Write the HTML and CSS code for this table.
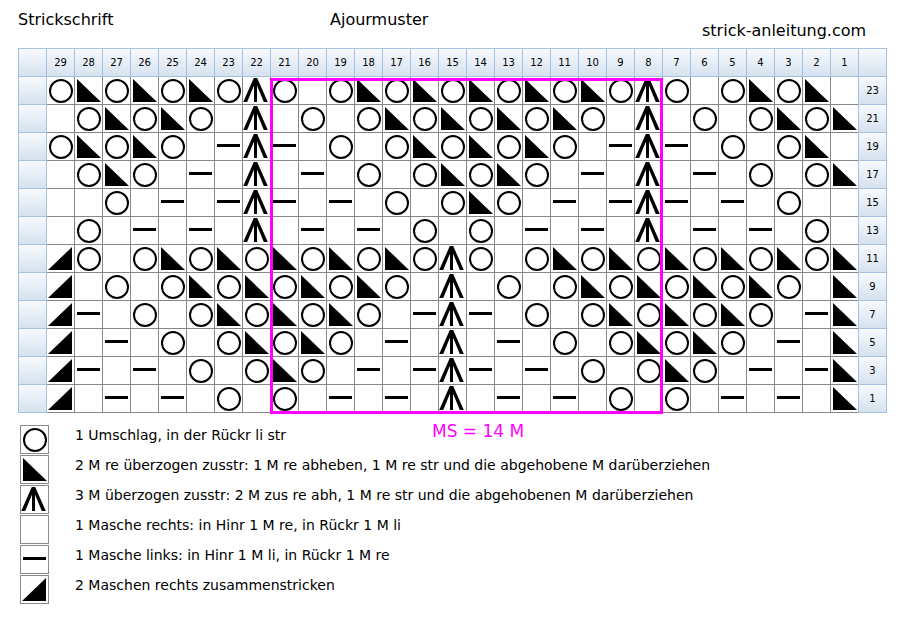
FILE: index.html
```html
<!DOCTYPE html>
<html lang="de">
<head>
<meta charset="utf-8">
<title>Strickschrift – Ajourmuster</title>
<link rel="stylesheet" href="styles.css">
</head>
<body>
<div class="page">
  <header class="titles">
    <span class="title">Strickschrift</span>
    <span class="title">Ajourmuster</span>
    <span class="title site">strick-anleitung.com</span>
  </header>

  <div class="chart-wrap">
    <div class="chart">
      <i class="h"></i><i class="h">29</i><i class="h">28</i><i class="h">27</i><i class="h">26</i><i class="h">25</i><i class="h">24</i><i class="h">23</i><i class="h">22</i><i class="h">21</i><i class="h">20</i><i class="h">19</i><i class="h">18</i><i class="h">17</i><i class="h">16</i><i class="h">15</i><i class="h">14</i><i class="h">13</i><i class="h">12</i><i class="h">11</i><i class="h">10</i><i class="h">9</i><i class="h">8</i><i class="h">7</i><i class="h">6</i><i class="h">5</i><i class="h">4</i><i class="h">3</i><i class="h">2</i><i class="h">1</i><i class="h n"></i>

      <i class="h"></i><i class="o"></i><i class="r"></i><i class="o"></i><i class="r"></i><i class="o"></i><i class="r"></i><i class="o"></i><i class="a"></i><i class="o"></i><i></i><i class="o"></i><i class="r"></i><i class="o"></i><i class="r"></i><i class="o"></i><i class="r"></i><i class="o"></i><i class="r"></i><i class="o"></i><i class="r"></i><i class="o"></i><i class="a"></i><i class="o"></i><i></i><i class="o"></i><i class="r"></i><i class="o"></i><i class="r"></i><i></i><i class="h n">23</i>

      <i class="h"></i><i></i><i class="o"></i><i class="r"></i><i class="o"></i><i class="r"></i><i class="o"></i><i></i><i class="a"></i><i></i><i class="o"></i><i></i><i class="o"></i><i class="r"></i><i class="o"></i><i class="r"></i><i class="o"></i><i class="r"></i><i class="o"></i><i class="r"></i><i class="o"></i><i></i><i class="a"></i><i></i><i class="o"></i><i></i><i class="o"></i><i class="r"></i><i class="o"></i><i class="r"></i><i class="h n">21</i>

      <i class="h"></i><i class="o"></i><i class="r"></i><i class="o"></i><i class="r"></i><i class="o"></i><i></i><i class="d"></i><i class="a"></i><i class="d"></i><i></i><i class="o"></i><i></i><i class="o"></i><i class="r"></i><i class="o"></i><i class="r"></i><i class="o"></i><i class="r"></i><i class="o"></i><i></i><i class="d"></i><i class="a"></i><i class="d"></i><i></i><i class="o"></i><i></i><i class="o"></i><i class="r"></i><i></i><i class="h n">19</i>

      <i class="h"></i><i></i><i class="o"></i><i class="r"></i><i class="o"></i><i></i><i class="d"></i><i></i><i class="a"></i><i></i><i class="d"></i><i></i><i class="o"></i><i></i><i class="o"></i><i class="r"></i><i class="o"></i><i class="r"></i><i class="o"></i><i></i><i class="d"></i><i></i><i class="a"></i><i></i><i class="d"></i><i></i><i class="o"></i><i></i><i class="o"></i><i class="r"></i><i class="h n">17</i>

      <i class="h"></i><i></i><i></i><i class="o"></i><i></i><i class="d"></i><i></i><i class="d"></i><i class="a"></i><i class="d"></i><i></i><i class="d"></i><i></i><i class="o"></i><i></i><i class="o"></i><i class="r"></i><i class="o"></i><i></i><i class="d"></i><i></i><i class="d"></i><i class="a"></i><i class="d"></i><i></i><i class="d"></i><i></i><i class="o"></i><i></i><i></i><i class="h n">15</i>

      <i class="h"></i><i></i><i class="o"></i><i></i><i class="d"></i><i></i><i class="d"></i><i></i><i class="a"></i><i></i><i class="d"></i><i></i><i class="d"></i><i></i><i class="o"></i><i></i><i class="o"></i><i></i><i class="d"></i><i></i><i class="d"></i><i></i><i class="a"></i><i></i><i class="d"></i><i></i><i class="d"></i><i></i><i class="o"></i><i></i><i class="h n">13</i>

      <i class="h"></i><i class="l"></i><i class="o"></i><i></i><i class="o"></i><i class="r"></i><i class="o"></i><i class="r"></i><i class="o"></i><i class="r"></i><i class="o"></i><i class="r"></i><i class="o"></i><i class="r"></i><i class="o"></i><i class="a"></i><i class="o"></i><i></i><i class="o"></i><i class="r"></i><i class="o"></i><i class="r"></i><i class="o"></i><i class="r"></i><i class="o"></i><i class="r"></i><i class="o"></i><i class="r"></i><i class="o"></i><i class="r"></i><i class="h n">11</i>

      <i class="h"></i><i class="l"></i><i></i><i class="o"></i><i></i><i class="o"></i><i class="r"></i><i class="o"></i><i class="r"></i><i class="o"></i><i class="r"></i><i class="o"></i><i class="r"></i><i class="o"></i><i></i><i class="a"></i><i></i><i class="o"></i><i></i><i class="o"></i><i class="r"></i><i class="o"></i><i class="r"></i><i class="o"></i><i class="r"></i><i class="o"></i><i class="r"></i><i class="o"></i><i></i><i class="r"></i><i class="h n">9</i>

      <i class="h"></i><i class="l"></i><i class="d"></i><i></i><i class="o"></i><i></i><i class="o"></i><i class="r"></i><i class="o"></i><i class="r"></i><i class="o"></i><i class="r"></i><i class="o"></i><i></i><i class="d"></i><i class="a"></i><i class="d"></i><i></i><i class="o"></i><i></i><i class="o"></i><i class="r"></i><i class="o"></i><i class="r"></i><i class="o"></i><i class="r"></i><i class="o"></i><i></i><i class="d"></i><i class="r"></i><i class="h n">7</i>

      <i class="h"></i><i class="l"></i><i></i><i class="d"></i><i></i><i class="o"></i><i></i><i class="o"></i><i class="r"></i><i class="o"></i><i class="r"></i><i class="o"></i><i></i><i class="d"></i><i></i><i class="a"></i><i></i><i class="d"></i><i></i><i class="o"></i><i></i><i class="o"></i><i class="r"></i><i class="o"></i><i class="r"></i><i class="o"></i><i></i><i class="d"></i><i></i><i class="r"></i><i class="h n">5</i>

      <i class="h"></i><i class="l"></i><i class="d"></i><i></i><i class="d"></i><i></i><i class="o"></i><i></i><i class="o"></i><i class="r"></i><i class="o"></i><i></i><i class="d"></i><i></i><i class="d"></i><i class="a"></i><i class="d"></i><i></i><i class="d"></i><i></i><i class="o"></i><i></i><i class="o"></i><i class="r"></i><i class="o"></i><i></i><i class="d"></i><i></i><i class="d"></i><i class="r"></i><i class="h n">3</i>

      <i class="h"></i><i class="l"></i><i></i><i class="d"></i><i></i><i class="d"></i><i></i><i class="o"></i><i></i><i class="o"></i><i></i><i class="d"></i><i></i><i class="d"></i><i></i><i class="a"></i><i></i><i class="d"></i><i></i><i class="d"></i><i></i><i class="o"></i><i></i><i class="o"></i><i></i><i class="d"></i><i></i><i class="d"></i><i></i><i class="r"></i><i class="h n">1</i>
    </div>
    <div class="repeat"><span class="repeat-label">MS = 14 M</span></div>
  </div>

  <ul class="legend">
    <li class="key"><span class="sym o"></span><span class="key-text">1 Umschlag, in der Rückr li str</span></li>
    <li class="key"><span class="sym r"></span><span class="key-text">2 M re überzogen zusstr: 1 M re abheben, 1 M re str und die abgehobene M darüberziehen</span></li>
    <li class="key"><span class="sym a"></span><span class="key-text">3 M überzogen zusstr: 2 M zus re abh, 1 M re str und die abgehobenen M darüberziehen</span></li>
    <li class="key"><span class="sym"></span><span class="key-text">1 Masche rechts: in Hinr 1 M re, in Rückr 1 M li</span></li>
    <li class="key"><span class="sym d"></span><span class="key-text">1 Masche links: in Hinr 1 M li, in Rückr 1 M re</span></li>
    <li class="key"><span class="sym l"></span><span class="key-text">2 Maschen rechts zusammenstricken</span></li>
  </ul>
</div>
</body>
</html>
```

FILE: styles.css
```css
html, body {
  margin: 0;
  padding: 0;
  background: #fff;
}

.page {
  padding: 11px 0 0 18px;
  font-family: "DejaVu Sans", Verdana, sans-serif;
  color: #000;
}

/* ---------- titles ---------- */
.titles {
  display: grid;
  grid-template-columns: 312px 372px auto;
  height: 37px;
  align-items: start;
}

.title {
  font-size: 16px;
  line-height: 18px;
  white-space: nowrap;
}

.site {
  padding-top: 11px;
}

/* ---------- chart ---------- */
.chart-wrap {
  position: relative;
  width: max-content;
}

.chart {
  display: grid;
  grid-template-columns: repeat(31, 28px);
  grid-auto-rows: 28px;
  border-top: 1px solid #a3c2e2;
  border-left: 1px solid #a3c2e2;
  width: max-content;
}

.chart > i {
  display: block;
  position: relative;
  box-sizing: border-box;
  border-right: 1px solid #868686;
  border-bottom: 1px solid #868686;
  background: #fff;
  font-style: normal;
}

.chart > .h {
  display: flex;
  align-items: center;
  justify-content: center;
  background: linear-gradient(#f7f9fd, #d6e2ef);
  border-right-color: #a3c2e2;
  border-bottom-color: #a3c2e2;
  font-size: 10px;
  color: #000;
}

.chart > .n {
  margin-left: -1px;
  border-left: 1px solid #a3c2e2;
}

/* pattern repeat frame */
.repeat {
  position: absolute;
  left: 252px;
  top: 30px;
  width: 393px;
  height: 336px;
  box-sizing: border-box;
  border: 3px solid #ff00ff;
}

.repeat-label {
  position: absolute;
  left: 159px;
  top: 340px;
  font-size: 17px;
  line-height: 20px;
  color: #ff00ff;
  white-space: nowrap;
}

/* ---------- symbols ---------- */
.o::before,
.r::before,
.l::before,
.d::before,
.a::before,
.a::after {
  content: "";
  position: absolute;
}

.o::before {
  left: 1.5px;
  top: 2px;
  width: 24px;
  height: 24px;
  box-sizing: border-box;
  border: 2.8px solid #000;
  border-radius: 50%;
}

.r::before {
  left: 2px;
  top: 2px;
  width: 24px;
  height: 23px;
  background: #000;
  clip-path: polygon(0 0, 0 100%, 100% 100%);
}

.l::before {
  left: 1px;
  top: 2px;
  width: 24px;
  height: 23px;
  background: #000;
  clip-path: polygon(100% 0, 100% 100%, 0 100%);
}

.d::before {
  left: 2px;
  top: 11px;
  width: 23px;
  height: 3px;
  background: #000;
}

.a::before {
  left: 0;
  top: 1px;
  width: 25px;
  height: 24px;
  background: #000;
  clip-path: polygon(10.8px 0, 14.2px 0, 24.8px 24px, 20.8px 24px, 12.5px 4px, 4.2px 24px, 0.2px 24px);
}

.a::after {
  left: 11px;
  top: 1px;
  width: 3px;
  height: 24px;
  background: #000;
}

/* ---------- legend ---------- */
.legend {
  list-style: none;
  margin: 12px 0 0 2px;
  padding: 0;
  display: flex;
  flex-direction: column;
  gap: 1px;
}

.key {
  display: flex;
  align-items: flex-start;
}

.sym {
  position: relative;
  flex: none;
  width: 29px;
  height: 29px;
  box-sizing: border-box;
  border: 1px solid #8a8a8a;
  background: #fff;
}

.key-text {
  margin: 2px 0 0 26px;
  font-size: 14px;
  line-height: 16px;
  white-space: nowrap;
}
```
